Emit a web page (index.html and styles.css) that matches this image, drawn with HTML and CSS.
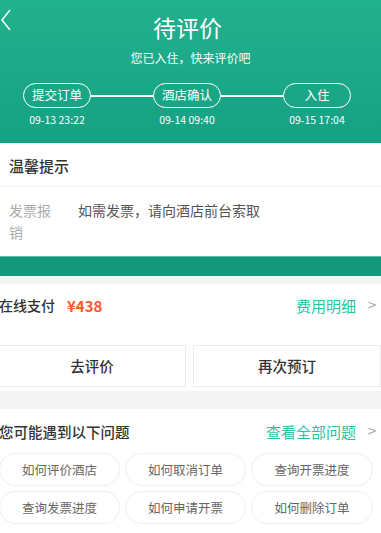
FILE: index.html
```html
<!DOCTYPE html>
<html lang="zh-CN">
<head>
    <meta charset="UTF-8">
    <meta name="viewport" content="width=device-width, initial-scale=1.0">
    <title>待评价</title>
    <link rel="stylesheet" href="styles.css">
</head>
<body>
    <div class="header">
        <div class="topbar">
            <svg class="back" width="12" height="22" viewBox="0 0 12 22"><path d="M10 1 L2 11 L10 21" fill="none" stroke="#fff" stroke-width="1.5"/></svg>
            <div class="title">待评价</div>
            <span></span>
        </div>
        <p class="sub">您已入住，快来评价吧</p>
        <div class="steps">
            <div class="step">
                <span class="pill">提交订单</span>
                <span class="date">09-13 23:22</span>
            </div>
            <div class="line"></div>
            <div class="step">
                <span class="pill">酒店确认</span>
                <span class="date">09-14 09:40</span>
            </div>
            <div class="line"></div>
            <div class="step">
                <span class="pill">入住</span>
                <span class="date">09-15 17:04</span>
            </div>
        </div>
    </div>
    <div class="tips">
        <div class="tips-title">温馨提示</div>
        <div class="tips-row">
            <span class="tips-label">发票报销</span>
            <span class="tips-text">如需发票，请向酒店前台索取</span>
        </div>
    </div>
    <div class="band"></div>

    <div class="pay">
        <span class="pay-label">在线支付</span>
        <span class="price">¥438</span>
        <span class="link">费用明细</span>
        <span class="arrow">&gt;</span>
    </div>
    <div class="btns">
        <div class="btn">去评价</div>
        <div class="btn">再次预订</div>
    </div>

    <div class="faq">
        <div class="faq-head">
            <span class="faq-title">您可能遇到以下问题</span>
            <span class="link">查看全部问题</span>
            <span class="arrow">&gt;</span>
        </div>
        <div class="chips">
            <span class="chip">如何评价酒店</span>
            <span class="chip">如何取消订单</span>
            <span class="chip">查询开票进度</span>
            <span class="chip">查询发票进度</span>
            <span class="chip">如何申请开票</span>
            <span class="chip">如何删除订单</span>
        </div>
    </div>
</body>
</html>
```
FILE: styles.css
```css
body{
    margin: 0;
    width: 381px;
    background: #f4f4f4;
    font-family: "Noto Sans CJK SC", "Noto Sans", sans-serif;
    color: #333;
    overflow: hidden;
}
.header{
    height: 143px;
    background: linear-gradient(#22b18d, #15a183);
    color: #fff;
}
.topbar{
    display: grid;
    grid-template-columns: 40px 1fr 40px;
    align-items: center;
    height: 46px;
    padding-top: 4px;
}
.back{
    margin-top: -14px;
}
.title{
    text-align: center;
    font-size: 23px;
    margin-left: -6px;
}
.sub{
    margin: -1px 0 0;
    text-align: center;
    font-size: 12px;
}
.steps{
    display: flex;
    margin: 17px 0 0 23px;
}
.step{
    width: 68px;
    display: flex;
    flex-direction: column;
    align-items: center;
}
.pill{
    box-sizing: border-box;
    width: 68px;
    height: 25px;
    border: 1.5px solid #fff;
    border-radius: 13px;
    text-align: center;
    font-size: 12.5px;
    line-height: 22px;
}
.date{
    margin-top: 4px;
    font-size: 10.5px;
    white-space: nowrap;
}
.line{
    width: 62px;
    height: 1.5px;
    background: #fff;
    margin-top: 12px;
}
.tips{
    background: #fff;
}
.tips-title{
    font-size: 15px;
    font-weight: 500;
    padding: 12px 9px 0;
    height: 31px;
    border-bottom: 1px solid #f2f2f2;
}
.tips-row{
    display: flex;
    padding: 12px 9px 13px;
    font-size: 14px;
    line-height: 22px;
}
.tips-label{
    width: 48px;
    color: #aaa;
    margin-right: 21px;
}
.tips-text{
    color: #555;
}
.band{
    height: 19px;
    background: #15977b;
    border-top: 1px solid #5cbfa7;
}
.pay{
    display: flex;
    align-items: center;
    background: #fff;
    margin-top: 8px;
    height: 42px;
    padding-right: 4px;
}
.pay-label{
    font-size: 14px;
    font-weight: 500;
    margin-left: -1px;
}
.price{
    color: #f95a2a;
    font-size: 15px;
    font-weight: bold;
    margin-left: 12px;
}
.link{
    margin-left: auto;
    color: #2dc2a4;
    font-size: 15px;
}
.arrow{
    color: #aaa;
    font-family: "DejaVu Sans", sans-serif;
    font-size: 12px;
    margin-left: 11px;
}
.btns{
    display: flex;
    gap: 7px;
    background: #fff;
    padding: 19px 0 4px;
}
.btn{
    flex: 1;
    height: 40px;
    border: 1px solid #ececec;
    text-align: center;
    line-height: 40px;
    font-size: 14.5px;
    font-weight: 500;
}
.btn:first-child{
    margin-left: -2px;
}
.faq{
    background: #fff;
    margin-top: 18px;
    padding-bottom: 12px;
}
.faq-head{
    display: flex;
    align-items: center;
    height: 44px;
    padding-right: 4px;
}
.faq-title{
    font-size: 14.5px;
    font-weight: 500;
    margin-left: -1px;
}
.chips{
    display: grid;
    grid-template-columns: 121px 121px 122px;
    gap: 5px 5px;
    margin-left: -1px;
}
.chip{
    height: 31px;
    border: 1px solid #eee;
    border-radius: 16px;
    text-align: center;
    line-height: 31px;
    font-size: 12.5px;
    color: #666;
}
```
